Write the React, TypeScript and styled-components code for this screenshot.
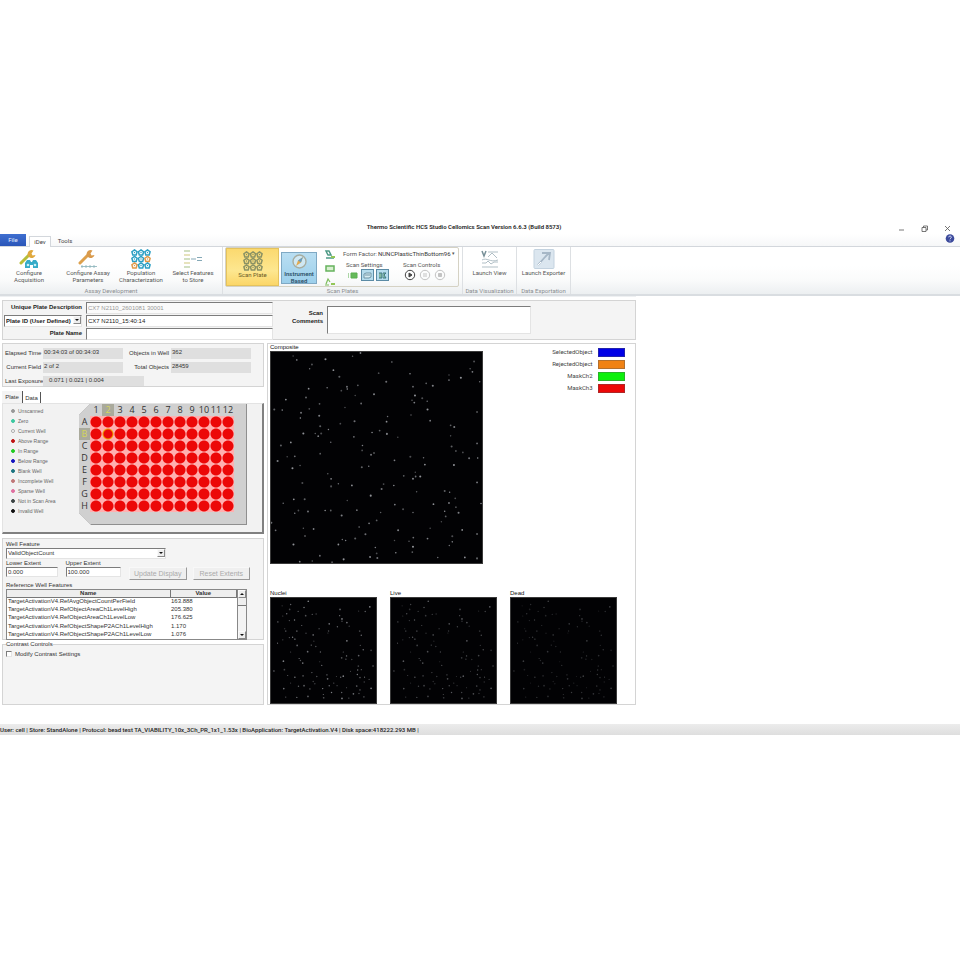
import React from "react";
import styled, { createGlobalStyle, css } from "styled-components";

const ui = 'Roboto, "Noto Sans", sans-serif';
const classic = '"Liberation Sans", Arial, sans-serif';

const Global = createGlobalStyle`
  * { box-sizing: border-box; }
  body { margin: 0; background: #fff; font-family: ${classic}; font-size: 6px; line-height: 8px; color: #333; }
  button, input, select, textarea { font: inherit; color: inherit; margin: 0; padding: 0; border-radius: 0; }
  fieldset { margin: 0; min-width: 0; }
  h1, h2, p { margin: 0; font-size: inherit; font-weight: inherit; }
`;

const Page = styled.div`
  display: flex;
  flex-direction: column;
  padding-top: 220px;
`;

/* ---------- Title and tabs ---------- */
const TitleBar = styled.header`
  display: grid;
  grid-template-columns: 1fr auto 1fr;
  align-items: center;
  height: 14px;
  padding-right: 8px;
  font: 600 6px/14px ${ui};
  color: #222;
`;
const Title = styled.h1`
  grid-column: 2;
  margin-right: 24px;
`;
const WindowButtons = styled.div`
  display: flex;
  justify-content: flex-end;
  gap: 14px;
  margin-top: 3px;
`;
const BareButton = styled.button`
  display: flex;
  align-items: center;
  justify-content: center;
  border: 0;
  background: none;
  min-width: 9px;
`;
const TabRow = styled.nav`
  display: flex;
  align-items: flex-end;
  height: 13px;
  padding-right: 5px;
  background: linear-gradient(#fff, #f6f7f8);
  border-bottom: 1px solid #d3d7dc;
  font: 6px/10px ${ui};
`;
const RibbonTab = styled.button<{ $kind?: "file" | "active" }>`
  height: 11px;
  border: 0;
  background: none;
  color: #444;
  width: 28px;
  ${(p) =>
    p.$kind === "file" &&
    css`
      width: 26px;
      height: 12px;
      color: #e4eeff;
      background: linear-gradient(#3f6fd0, #2a55b8);
    `}
  ${(p) =>
    p.$kind === "active" &&
    css`
      width: 22px;
      margin-left: 3px;
      margin-bottom: -1px;
      background: #fff;
      border: 1px solid #d3d7dc;
      border-bottom: 0;
    `}
`;
const Help = styled(BareButton)`
  margin-left: auto;
  margin-bottom: 3px;
`;

/* ---------- Ribbon ---------- */
const Ribbon = styled.div`
  display: flex;
  height: 49px;
  background: linear-gradient(#fff 40%, #fafbfb 70%, #eceff1);
  border-bottom: 2px solid #d9dde1;
  font: 6px/7px ${ui};
  color: #555;
`;
const Group = styled.section<{ $w: number }>`
  display: flex;
  flex-direction: column;
  flex: none;
  width: ${(p) => p.$w}px;
  border-right: 1px solid #dde0e3;
`;
const GroupBody = styled.div`
  display: flex;
  flex: 1;
  justify-content: center;
`;
const GroupName = styled.h2`
  height: 6px;
  line-height: 6px;
  text-align: center;
  color: #8a8d90;
`;
const Tool = styled.button<{ $w: number; $gap?: number }>`
  display: flex;
  flex-direction: column;
  align-items: center;
  flex: none;
  width: ${(p) => p.$w}px;
  margin-right: ${(p) => p.$gap ?? 0}px;
  padding-top: 2px;
  border: 0;
  background: none;
  white-space: nowrap;
  svg { flex: none; }
`;
const ScanFrame = styled.div`
  display: flex;
  height: 40px;
  margin: 0 3px 1px 2px;
  border: 1px solid #d5d2c4;
  border-radius: 2px;
`;
const ScanPlateTool = styled(Tool)`
  background: linear-gradient(#fbd96f, #fde790 60%, #fbd668);
  border: 1px solid #e5c35c;
  color: #6a5a26;
`;
const InstrumentTool = styled(Tool)`
  margin: 4px 5px 2px 2px;
  padding-top: 0;
  background: linear-gradient(#b9def2, #9ccfeb);
  border: 1px solid #7fa9c4;
  color: #2d5068;
  font-weight: 600;
`;
const IconStack = styled.div`
  display: flex;
  flex-direction: column;
  justify-content: space-between;
  flex: none;
  width: 16px;
  padding: 2px 0 0;
`;
const ScanOptions = styled.div`
  display: flex;
  flex-direction: column;
  flex: 1;
  min-width: 0;
  padding: 1px 3px 0 5px;
`;
const FormFactor = styled.label`
  display: flex;
  justify-content: space-between;
  line-height: 9px;
  white-space: nowrap;
`;
const PlainSelect = styled.select`
  appearance: none;
  border: 0;
  background: none;
  color: #333;
  flex: none;
  width: 73px;
`;
const Caret = styled.span`
  font-size: 5px;
`;
const OptionColumns = styled.div`
  display: flex;
  gap: 14px;
  padding: 3px 0 0 3px;
`;
const OptionGroup = styled.div`
  display: flex;
  flex-direction: column;
  gap: 1px;
`;
const ButtonRow = styled.div`
  display: flex;
  gap: 2px;
`;
const ToggleButton = styled(BareButton)<{ $on?: boolean }>`
  width: 13px;
  height: 12px;
  ${(p) => p.$on && "background: #b5dced; border: 1px solid #5b8ba5;"}
`;
const RoundButton = styled(BareButton)`
  width: 13px;
  height: 12px;
`;

/* ---------- Work area ---------- */
const Work = styled.main`
  width: 66.2%;
  min-width: 635px;
  padding: 3px 0 0 2px;
  border-top: 1px solid #eef0f2;
`;
const panel = css`
  background: #f4f4f4;
  border: 1px solid #d4d4d4;
`;
const inset = css`
  border: 1px solid #e4e4e4;
  border-top-color: #7c7c7c;
  border-left-color: #7c7c7c;
`;
const PlateInfo = styled.section`
  ${panel}
  display: grid;
  grid-template-columns: 78px 187px 46px 204px;
  column-gap: 4px;
  height: 40px;
  padding: 1px 0 0 1px;
  font-weight: bold;
  color: #222;
`;
const FieldColumn = styled.div`
  display: grid;
  grid-template-rows: repeat(3, 12px);
  row-gap: 1px;
  text-align: right;
  line-height: 11px;
  white-space: nowrap;
`;
const TextField = styled.input`
  ${inset}
  width: 100%;
  height: 100%;
  padding-left: 1px;
  background: #fff;
  font-weight: normal;
  &:disabled { color: #999; background: #fafafa; }
`;
const SelectBox = styled.span`
  ${inset}
  display: flex;
  background: #fff;
  min-width: 0;
  line-height: 9px;
`;
const SelectInput = styled.select`
  appearance: none;
  flex: 1;
  min-width: 0;
  padding-left: 1px;
  border: 0;
  background: none;
`;
const Arrow = styled.span<{ $up?: boolean }>`
  display: grid;
  place-items: center;
  flex: none;
  width: 8px;
  height: 8px;
  background: #eee;
  border: 1px solid #fafafa;
  border-right-color: #888;
  border-bottom-color: #888;
  &::after {
    content: "";
    border: 2px solid transparent;
    border-${(p) => (p.$up ? "bottom" : "top")}: 2px solid #111;
    border-${(p) => (p.$up ? "top" : "bottom")}: 0;
  }
`;
const CommentLabel = styled.label`
  padding-top: 7px;
  text-align: right;
`;
const Comments = styled.textarea`
  ${inset}
  height: 28px;
  margin-top: 4px;
  background: #fff;
  resize: none;
`;
const Columns = styled.div`
  display: grid;
  grid-template-columns: 262px 1fr;
  column-gap: 3px;
  margin-top: 3px;
`;
const Side = styled.div`
  display: flex;
  flex-direction: column;
`;
const Stats = styled.dl`
  ${panel}
  display: grid;
  grid-template-columns: 36px 80px 44px 80px;
  column-gap: 2px;
  row-gap: 3px;
  align-items: start;
  height: 44px;
  margin: 0;
  padding: 4px 2px 0;
  dt { text-align: right; padding-top: 1px; white-space: nowrap; }
  dd { margin: 0; height: 11px; background: #dfdfdf; line-height: 8px; padding-left: 1px; }
  dd:last-child { grid-column: span 2; width: 101px; padding-left: 6px; height: 10px; }
`;
const PlateTabs = styled.div`
  display: flex;
  margin-top: 4px;
  height: 12px;
`;
const PlateTab = styled.button<{ $on?: boolean }>`
  border: 0;
  border-right: 1px solid #555;
  background: ${(p) => (p.$on ? "#f4f4f4" : "none")};
  width: ${(p) => (p.$on ? 21 : 18)}px;
  margin-top: ${(p) => (p.$on ? 0 : 1)}px;
`;
const PlatePane = styled.section`
  display: flex;
  height: 131px;
  background: #f2f2f2;
  border: 1px solid #e3e3e3;
  border-right: 2px solid #808080;
  border-bottom: 2px solid #808080;
`;
const Legend = styled.ul`
  width: 76px;
  margin: 0;
  padding: 2px 0 0 8px;
  list-style: none;
  font-size: 5px;
  line-height: 10px;
  color: #666;
  li { display: flex; align-items: center; gap: 3px; white-space: nowrap; }
`;
const Dot = styled.i<{ $c: string; $open?: boolean }>`
  width: 4px;
  height: 4px;
  border-radius: 50%;
  border: 1px solid ${(p) => p.$c};
  background: ${(p) => (p.$open ? "#fff" : p.$c)};
`;
const PlateEdge = styled.div`
  width: 168px;
  height: 121px;
  padding: 0 1px 1px 0;
  background: #8f8f8f;
  clip-path: polygon(11px 0, 100% 0, 100% 100%, 12px 100%, 0 109px, 0 11px);
`;
const PlateTop = styled.div`
  display: grid;
  grid-template-columns: 11px repeat(12, 12px);
  grid-auto-rows: 12px;
  height: 100%;
  background: #d0d0d0;
  font: 9px/12px "Open Sans", sans-serif;
  text-align: center;
  color: #333;
`;
const Mark = styled.span<{ $on: boolean }>`
  white-space: nowrap;
  ${(p) => p.$on && "background: #aaaa9c; color: #d5d55c;"}
`;
const WellCell = styled.button<{ $on: boolean }>`
  width: 12px;
  height: 12px;
  border: 0;
  background: radial-gradient(circle, ${(p) => (p.$on ? "#ec0808 4px, #f0a000 5px, #ffb0b0 6px" : "#ec0808 5px, #ffb0b0 6px")});
`;
const FeaturePane = styled.section`
  ${panel}
  margin-top: 4px;
  height: 102px;
  padding: 1px 16px 0 3px;
  display: flex;
  flex-direction: column;
`;
const FeatureSelect = styled(SelectBox)`
  width: 160px;
  height: 11px;
`;
const Extents = styled.div`
  display: flex;
  align-items: flex-end;
  width: 246px;
  height: 20px;
  label { width: 60px; padding-right: 8px; line-height: 8px; }
  label + label { padding-right: 4px; }
  label > input { display: block; height: 10px; }
`;
const PushButton = styled.button`
  width: 58px;
  height: 13px;
  margin: 0 2px -3px 4px;
  border: 1px solid #f8f8f8;
  border-right-color: #999;
  border-bottom-color: #999;
  background: #efefef;
  color: #aaa;
  font-size: 7px;
`;
const TableTitle = styled.h2`
  margin-top: 4px;
  line-height: 8px;
`;
const TableBox = styled.div`
  display: flex;
  width: 241px;
  height: 51px;
  border: 1px solid #888;
`;
const Table = styled.table`
  flex: 1;
  height: 49px;
  border-collapse: collapse;
  background: #fff;
  table-layout: fixed;
  th { height: 7px; padding: 0; line-height: 6px; background: #eee; border-bottom: 1px solid #777; border-right: 1px solid #777; }
  th:first-child { width: 163px; }
  td { height: 8px; padding: 0 1px; line-height: 7px; white-space: nowrap; overflow: hidden; }
`;
const ScrollBar = styled.div`
  display: flex;
  flex-direction: column;
  width: 9px;
  background: #f3f3f3;
  border-left: 1px solid #888;
`;
const Thumb = styled.span`
  height: 8px;
  margin-bottom: auto;
  background: #eee;
  border-bottom: 1px solid #777;
`;
const Contrast = styled.fieldset`
  ${panel}
  margin-top: 1px;
  height: 64px;
  padding: 2px 3px;
  legend { padding: 0; line-height: 7px; }
  label { display: flex; align-items: center; gap: 3px; }
  input { appearance: none; width: 6px; height: 6px; background: #fff; ${inset} }
`;
const Viewer = styled.section`
  display: flex;
  flex-direction: column;
  justify-content: space-between;
  padding: 0 0 0 2px;
  border: 1px solid #d4d4d4;
  background: #fff;
  color: #111;
`;
const TopView = styled.div`
  display: flex;
  justify-content: space-between;
`;
const Figure = styled.figure`
  margin: 0;
  svg { display: block; background: #020204; border: 1px solid #3a3a3a; }
`;
const Caption = styled.figcaption`
  line-height: 7px;
`;
const Small = styled.div`
  display: flex;
  gap: 13px;
`;
const Keys = styled.ul`
  margin: 2px 10px 0 0;
  padding: 0;
  list-style: none;
  font-family: ${ui};
  color: #444;
  li { display: flex; justify-content: flex-end; align-items: center; gap: 5px; height: 12px; }
`;
const Swatch = styled.i<{ $c: string }>`
  width: 27px;
  height: 9px;
  background: ${(p) => p.$c};
  border: 1px solid #5556;
`;
const Status = styled.footer`
  height: 11px;
  margin-top: 19px;
  background: linear-gradient(#ececec, #dedede);
  font: 500 6px/12px ${ui};
  color: #222;
  white-space: pre;
`;

/* ---------- Drawings ---------- */
const Wrench = ({ color, extra }: { color: string; extra: React.ReactNode }) => (
  <svg width="22" height="20" viewBox="0 0 22 20">
    <path d="M3 14 11 6" stroke={color} strokeWidth="3" strokeLinecap="round" />
    <path d="M15.500 1.500a4 4 0 1 0 2 4.500l-3 .5-1-2z" fill={color === "#b7bd38" ? "#e0a83c" : "#d99a4c"} />
    {extra}
  </svg>
);
const Acquisition = () => (
  <Wrench
    color="#b7bd38"
    extra={
      <g fill="#35abc8">
        <path d="M7 19v-5l2-3h3l1 2h1l1-2h3l2 3v5h-5v-3h-3v3z" />
        <circle cx="10" cy="16" r="1.300" fill="#c9f0f6" />
        <circle cx="17" cy="16" r="1.300" fill="#c9f0f6" />
      </g>
    }
  />
);
const Parameters = () => (
  <Wrench color="#dda04c" extra={<path d="M4 17.500h16M5 16v3M9 16v3M13 16v3M17 16v3" stroke="#86b0b8" strokeWidth=".8" />} />
);
const Cells = ({ colors }: { colors: string[] }) => (
  <svg width="20" height="20" viewBox="0 0 20 20" fill="none">
    {colors.map((c, i) => (
      <g key={i} transform={`translate(${3.5 + (i % 3) * 6.5} ${3.5 + Math.floor(i / 3) * 6.5})`}>
        <path d="M0-2.600 2.600-.8 1.700 2.400h-3.400L-2.600-.8z" stroke={c} strokeWidth="1.500" />
        <circle r=".7" fill={c} />
      </g>
    ))}
  </svg>
);
const Features = () => (
  <svg width="20" height="20" viewBox="0 0 20 20" strokeWidth="1.200" fill="none">
    <path d="M1 2h6M1 10h6M1 18h6" stroke="#a3bf84" />
    <path d="M1 6h6M1 14h6" stroke="#cfc77c" />
    <path d="M8 10h5M14 8.500h5M14 11.500h5" stroke="#85a9b7" />
  </svg>
);
const Compass = () => (
  <svg width="17" height="17" viewBox="0 0 17 17">
    <circle cx="8.500" cy="8.500" r="6.500" fill="#cfe8f4" stroke="#a7ada0" strokeWidth="1.400" />
    <path d="m12 4-2 5.500L5 13l2-5.500z" fill="#e2aa52" />
    <path d="m12 4-2 5.500-3-2z" fill="#6a9fc0" />
  </svg>
);
const MiniIcon = ({ kind }: { kind: "load" | "plate" | "eject" }) => (
  <svg width="12" height="9" viewBox="0 0 12 9" fill="none">
    {kind === "load" && <path d="M2 1h3l2 4H4zM2 8h8" stroke="#4e9a86" strokeWidth="1.500" />}
    {kind === "plate" && <rect x="2" y="2" width="8" height="5" stroke="#66b35d" strokeWidth="1.500" fill="#d8efd0" />}
    {kind === "eject" && <path d="m2 7 2-5 2 3M1 8h4" stroke="#7dbd5c" strokeWidth="1.200" />}
    {kind !== "plate" && <path d="M7 6h4v2H7z" fill="#93c758" />}
  </svg>
);
const SettingIcon = ({ kind }: { kind: number }) => (
  <svg width="10" height="9" viewBox="0 0 10 9" fill="none">
    {kind === 0 && <path d="M0 2v5M3 2h6v5H3z" stroke="#5bb04e" fill="#65b95a" />}
    {kind === 1 && <path d="M1 7V3l2-1h5v4l-2 1zM2 4h5" stroke="#6e94a5" fill="#d7ecf2" />}
    {kind === 2 && <path d="M1 2h3v5H1M5 2h3L6 4l2 3H5" stroke="#3f7782" fill="#82b7a2" />}
  </svg>
);
const Control = ({ kind }: { kind: "play" | "pause" | "stop" }) => {
  const c = kind === "play" ? "#444" : "#c3c3c3";
  return (
    <svg width="12" height="12" viewBox="0 0 12 12" fill="none" stroke={c}>
      <circle cx="6" cy="6" r="4.700" />
      {kind === "play" && <path d="m5 4 3 2-3 2z" fill={c} />}
      {kind === "pause" && <path d="M5 4v4M7 4v4" />}
      {kind === "stop" && <path d="M4.500 4.500h3v3h-3z" fill={c} />}
    </svg>
  );
};
const ViewIcon = () => (
  <svg width="20" height="20" viewBox="0 0 20 20" fill="none" stroke="#b1bfc6">
    <path d="m2 2 2 5 2-5" stroke="#789098" strokeWidth="1.500" />
    <path d="M8 3h10M8 8l4-4 5 5M2 11c5-3 8 3 16 0M2 14h4l2-2 3 3 3-2h4M2 18h16" />
  </svg>
);
const ExportIcon = () => (
  <svg width="22" height="20" viewBox="0 0 22 20" fill="none">
    <rect x="1" y="0.500" width="20" height="19" rx="1" fill="#dbe6ef" stroke="#c3d2df" />
    <path d="m5 16 7-8M9 4l8 0-1 7M12 8l4-4" stroke="#a6b7c6" strokeWidth="1.800" />
    <path d="m5 16 3-3" stroke="#fff" />
  </svg>
);
const HelpIcon = () => (
  <svg width="10" height="9" viewBox="0 0 10 9">
    <circle cx="5" cy="4.500" r="4.300" fill="#3c4a9c" />
    <path d="M3.700 3.300c0-1.700 2.700-1.600 2.600 0 0 1-1.300 1-1.300 2M5 6.400v.9" stroke="#dfe5ff" fill="none" />
  </svg>
);
const WindowIcon = ({ d }: { d: string }) => (
  <svg width="7" height="7" viewBox="0 0 7 7" fill="none" stroke="#555" strokeWidth=".8">
    <path d={d} />
  </svg>
);

/* Bead positions, in thirds of a pixel from the field's top-left corner. */
const field =
  "67,12 78,24 165,22 247,13 271,3 124,38 117,51 189,55 207,75 366,30 326,64 349,90 421,66 470,95 490,102 539,70 539,85 575,78 603,51 610,60 615,29 632,90 114,111 106,138 170,108 213,117 230,105 231,112 263,101 312,128 255,132 430,105 436,132 427,146 434,153 458,140 473,149 45,144 10,174 34,176 116,172 91,184 89,200 147,157 146,193 224,168 273,156 474,174 424,191 482,208 624,182 353,195 350,211 149,225 174,235 210,217 253,210 306,244 329,238 351,248 384,258 251,257 98,247 134,247 143,255 152,247 181,273 60,274 30,283 277,283 276,298 303,311 312,306 149,308 20,330 49,317 72,316 65,352 88,344 374,328 422,317 462,320 466,341 547,286 560,300 581,304 600,322 626,321 544,222 555,227 544,254 624,277 554,342 172,369 182,384 182,407 204,399 245,404 275,349 296,346 341,400 335,415 372,404 402,375 430,384 437,364 438,377 452,377 441,423 624,395 95,397 37,458 69,446 102,446 72,488 83,480 112,483 164,480 181,480 214,495 231,450 260,479 302,435 332,486 375,462 400,476 430,486 492,461 526,421 541,425 558,443 539,457 526,482 529,498 568,487 516,514 14,540 68,583 98,534 129,536 103,557 216,568 204,583 255,565 226,571 267,530 286,552 297,519 320,510 385,540 482,534 431,562 430,590 418,573 474,565 549,558 540,586 579,539 624,551 316,592 320,610 322,624 378,608 428,606 300,621 374,571 148,617 220,628 125,633 87,635 185,637 505,622 587,622 624,625 549,575 560,470 1,517 636,459";
const smallField =
  "34,24 60,20 114,10 36,55 48,48 57,35 83,41 101,29 106,54 126,50 138,49 211,35 210,54 217,71 232,75 268,40 288,41 302,27 42,94 21,73 45,101 56,69 72,67 79,101 94,84 107,108 129,113 147,94 176,101 178,79 174,107 203,88 217,64 239,86 276,114 271,101 56,121 66,120 73,126 20,138 36,128 80,145 123,144 137,148 112,164 131,132 151,165 232,131 273,145 282,158 306,160 221,165 231,177 216,183 229,187 247,188 268,176 86,185 90,191 97,199 149,195 155,206 38,193 60,165 9,223 41,219 51,237 73,242 98,238 125,228 129,255 101,268 119,278 140,240 173,247 200,240 213,242 221,239 243,224 265,220 267,208 276,219 264,234 272,243 286,242 285,257 262,269 272,281 269,292 252,293 231,274 216,289 217,307 202,268 178,268 171,235 192,260 158,277 161,305 160,295 134,262 113,301 79,304 45,303 39,277 60,260 84,270 306,276 300,249 312,208 284,302 238,306 185,289";
const pairs = (s: string) => s.split(" ").map((p) => p.split(",").map(Number));

function BeadField({ size, data, dim, blobs }: { size: number; data: string; dim: number; blobs?: boolean }) {
  return (
    <svg width={size} height={size} viewBox={`0 0 ${size * 3} ${size * 3}`}>
      {pairs(data).map(([x, y], i) => (
        <circle key={i} cx={x} cy={y} r={blobs ? 2.3 + (i % 3) * 0.4 : 1.8 + (i % 3) * 0.4} fill="#c9ccd2" opacity={dim * (0.5 + ((i * 7) % 5) / 9)} />
      ))}
    </svg>
  );
}

const legend: [string, string, boolean?][] = [
  ["Unscanned", "#999"],
  ["Zero", "#3cc8a0"],
  ["Current Well", "#aaa", true],
  ["Above Range", "#c01414"],
  ["In Range", "#22cc22"],
  ["Below Range", "#1414c0"],
  ["Blank Well", "#1c7480"],
  ["Incomplete Well", "#c07878"],
  ["Sparse Well", "#e070a0"],
  ["Not in Scan Area", "#3c4444"],
  ["Invalid Well", "#111"],
];
const features = [
  ["RefAvgObjectCountPerField", "163.888"],
  ["RefObjectAreaCh1LevelHigh", "205.380"],
  ["RefObjectAreaCh1LevelLow", "176.625"],
  ["RefObjectShapeP2ACh1LevelHigh", "1.170"],
  ["RefObjectShapeP2ACh1LevelLow", "1.076"],
];
const keys = [
  ["SelectedObject", "#0000e6"],
  ["RejectedObject", "#f08214"],
  ["MaskCh2", "#0cf00c"],
  ["MaskCh3", "#ec0808"],
];
const blue = "#2b9fc4";
const orange = "#e09a4a";
const grey = "#8b9264";

export default function App() {
  return (
    <Page>
      <Global />
      <TitleBar>
        <Title>Thermo Scientific HCS Studio Cellomics Scan Version 6.6.3 (Build 8573)</Title>
        <WindowButtons>
          <BareButton aria-label="Minimize"><WindowIcon d="M1 5h5" /></BareButton>
          <BareButton aria-label="Restore"><WindowIcon d="M1 2.500h4v4H1zM2.500 2.500v-1.500h4v4H5" /></BareButton>
          <BareButton aria-label="Close"><WindowIcon d="m1 1 5 5M6 1 1 6" /></BareButton>
        </WindowButtons>
      </TitleBar>
      <TabRow>
        <RibbonTab $kind="file">File</RibbonTab>
        <RibbonTab $kind="active">iDev</RibbonTab>
        <RibbonTab>Tools</RibbonTab>
        <Help aria-label="Help"><HelpIcon /></Help>
      </TabRow>
      <Ribbon>
        <Group $w={223}>
          <GroupBody>
            <Tool $w={50} $gap={8}><Acquisition />Configure<br />Acquisition</Tool>
            <Tool $w={52}><Parameters />Configure Assay<br />Parameters</Tool>
            <Tool $w={54}><Cells colors={[blue, blue, blue, blue, blue, orange, orange, blue, blue]} />Population<br />Characterization</Tool>
            <Tool $w={50}><Features />Select Features<br />to Store</Tool>
          </GroupBody>
          <GroupName>Assay Development</GroupName>
        </Group>
        <Group $w={240}>
          <ScanFrame>
            <ScanPlateTool $w={53}><Cells colors={Array(9).fill(grey)} />Scan Plate</ScanPlateTool>
            <InstrumentTool $w={36}><Compass />Instrument<br />Based</InstrumentTool>
            <IconStack>
              <BareButton aria-label="Load plate"><MiniIcon kind="load" /></BareButton>
              <BareButton aria-label="Plate"><MiniIcon kind="plate" /></BareButton>
              <BareButton aria-label="Eject plate"><MiniIcon kind="eject" /></BareButton>
            </IconStack>
            <ScanOptions>
              <FormFactor>
                Form Factor:
                <PlainSelect><option>NUNCPlasticThinBottom96</option></PlainSelect>
                <Caret>▾</Caret>
              </FormFactor>
              <OptionColumns>
                <OptionGroup>
                  Scan Settings
                  <ButtonRow>
                    <ToggleButton aria-label="Start position"><SettingIcon kind={0} /></ToggleButton>
                    <ToggleButton $on aria-label="Show images"><SettingIcon kind={1} /></ToggleButton>
                    <ToggleButton $on aria-label="Show results"><SettingIcon kind={2} /></ToggleButton>
                  </ButtonRow>
                </OptionGroup>
                <OptionGroup>
                  Scan Controls
                  <ButtonRow>
                    <RoundButton aria-label="Start"><Control kind="play" /></RoundButton>
                    <RoundButton aria-label="Pause"><Control kind="pause" /></RoundButton>
                    <RoundButton aria-label="Stop"><Control kind="stop" /></RoundButton>
                  </ButtonRow>
                </OptionGroup>
              </OptionColumns>
            </ScanOptions>
          </ScanFrame>
          <GroupName>Scan Plates</GroupName>
        </Group>
        <Group $w={54}>
          <GroupBody><Tool $w={50}><ViewIcon />Launch View</Tool></GroupBody>
          <GroupName>Data Visualization</GroupName>
        </Group>
        <Group $w={54}>
          <GroupBody><Tool $w={50}><ExportIcon />Launch Exporter</Tool></GroupBody>
          <GroupName>Data Exportation</GroupName>
        </Group>
      </Ribbon>

      <Work>
        <PlateInfo>
          <FieldColumn>
            <label htmlFor="description">Unique Plate Description</label>
            <SelectBox>
              <SelectInput aria-label="Plate identifier"><option>Plate ID (User Defined)</option></SelectInput>
              <Arrow />
            </SelectBox>
            <label htmlFor="name">Plate Name</label>
          </FieldColumn>
          <FieldColumn>
            <TextField id="description" disabled defaultValue="CX7 N2110_2601081 30001" />
            <TextField aria-label="Plate ID" defaultValue="CX7 N2110_15:40:14" />
            <TextField id="name" />
          </FieldColumn>
          <CommentLabel htmlFor="comments">Scan<br />Comments</CommentLabel>
          <Comments id="comments" />
        </PlateInfo>
        <Columns>
          <Side>
            <Stats>
              <dt>Elapsed Time</dt><dd>00:34:03 of 00:34:03</dd>
              <dt>Objects in Well</dt><dd>362</dd>
              <dt>Current Field</dt><dd>2 of 2</dd>
              <dt>Total Objects</dt><dd>28459</dd>
              <dt>Last Exposure</dt><dd>0.071 | 0.021 | 0.004</dd>
            </Stats>
            <PlateTabs>
              <PlateTab $on>Plate</PlateTab>
              <PlateTab>Data</PlateTab>
            </PlateTabs>
            <PlatePane>
              <Legend>
                {legend.map(([name, c, open]) => (
                  <li key={name}><Dot $c={c} $open={open} />{name}</li>
                ))}
              </Legend>
              <PlateEdge>
                <PlateTop>
                  <span />
                  {Array.from({ length: 12 }, (_, i) => <Mark key={i} $on={i === 1}>{i + 1}</Mark>)}
                  {"ABCDEFGH".split("").map((row) => (
                    <React.Fragment key={row}>
                      <Mark $on={row === "B"}>{row}</Mark>
                      {Array.from({ length: 12 }, (_, i) => (
                        <WellCell key={i} $on={row === "B" && i === 1} aria-label={`Well ${row}${i + 1}`} />
                      ))}
                    </React.Fragment>
                  ))}
                </PlateTop>
              </PlateEdge>
            </PlatePane>
            <FeaturePane>
              <label htmlFor="feature">Well Feature</label>
              <FeatureSelect>
                <SelectInput id="feature"><option>ValidObjectCount</option></SelectInput>
                <Arrow />
              </FeatureSelect>
              <Extents>
                <label>Lower Extent<TextField defaultValue="0.000" /></label>
                <label>Upper Extent<TextField defaultValue="100.000" /></label>
                <PushButton disabled>Update Display</PushButton>
                <PushButton disabled>Reset Extents</PushButton>
              </Extents>
              <TableTitle>Reference Well Features</TableTitle>
              <TableBox>
                <Table>
                  <thead><tr><th>Name</th><th>Value</th></tr></thead>
                  <tbody>
                    {features.map(([n, v]) => (
                      <tr key={n}><td>TargetActivationV4.{n}</td><td>{v}</td></tr>
                    ))}
                  </tbody>
                </Table>
                <ScrollBar><Arrow $up /><Thumb /><Arrow /></ScrollBar>
              </TableBox>
            </FeaturePane>
            <Contrast>
              <legend>Contrast Controls</legend>
              <label><input type="checkbox" />Modify Contrast Settings</label>
            </Contrast>
          </Side>
          <Viewer>
            <TopView>
              <Figure>
                <Caption>Composite</Caption>
                <BeadField size={213} data={field} dim={0.75} blobs />
              </Figure>
              <Keys>
                {keys.map(([n, c]) => <li key={n}>{n}<Swatch $c={c} /></li>)}
              </Keys>
            </TopView>
            <Small>
              <Figure><Caption>Nuclei</Caption><BeadField size={107} data={smallField} dim={0.65} /></Figure>
              <Figure><Caption>Live</Caption><BeadField size={107} data={smallField} dim={0.45} /></Figure>
              <Figure><Caption>Dead</Caption><BeadField size={107} data={smallField} dim={0.3} /></Figure>
            </Small>
          </Viewer>
        </Columns>
      </Work>
      <Status>User: cell | Store: StandAlone | Protocol: bead test TA_VIABILITY_10x_3Ch_PR_1x1_1.53x | BioApplication: TargetActivation.V4 | Disk space:418222.293 MB |</Status>
    </Page>
  );
}
